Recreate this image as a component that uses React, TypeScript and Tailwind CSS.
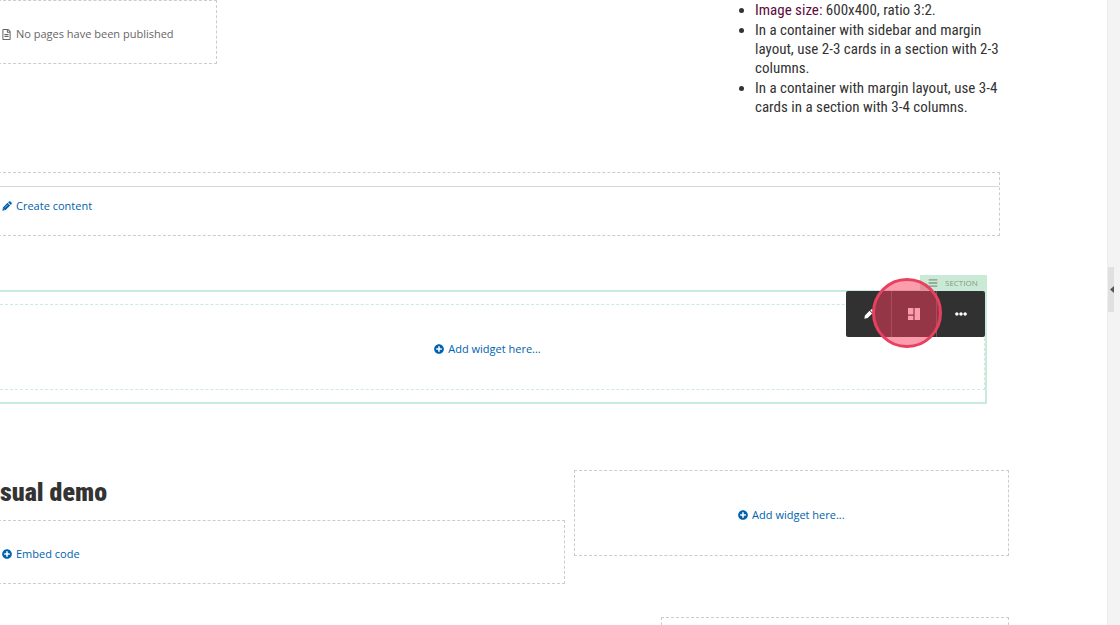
import React from 'react';
import { FaBars, FaEllipsisH, FaPlusCircle, FaRegFileAlt } from 'react-icons/fa';

interface ActionLinkProps {
  icon: React.ReactNode;
  children: React.ReactNode;
}

const ActionLink: React.FC<ActionLinkProps> = ({ icon, children }) => (
  <a href="#" className="inline-flex items-center gap-1 text-[11px] leading-4 text-[#0062ae]">
    {icon}
    <span>{children}</span>
  </a>
);

const PlusIcon = () => <FaPlusCircle className="size-2.5" />;

const PencilIcon = ({ className }: { className: string }) => (
  <svg viewBox="0 0 16 16" className={className} fill="currentColor" aria-hidden="true">
    <path d="M0.5 15.5 1.5 10.2 8.8 2.9 13.1 7.2 5.8 14.5zM9.8 1.9 11.2 0.6Q12.4 -0.2 13.5 0.8L15.2 2.5Q16.2 3.6 15.4 4.8L14.1 6.2z" />
    <path d="M2.3 12.1 3.9 13.7M4.6 10.6 9.6 5.6" stroke="white" strokeWidth="0.8" fill="none" />
  </svg>
);

const LayoutIcon = () => (
  <svg viewBox="0 0 12 12" className="size-3" fill="currentColor" aria-hidden="true">
    <path d="M0 0h5.4v6.6H0zM0 7.8h5.4V12H0zM6.6 0H12v12H6.6z" />
  </svg>
);

const SectionToolbar = () => (
  <div className="absolute -top-px right-0 flex h-[46px] divide-x divide-[#5c5c5c] rounded-[2px] bg-[#313131] text-white">
    <button type="button" aria-label="Edit section" className="flex w-[46px] items-center justify-center">
      <PencilIcon className="size-2.5" />
    </button>
    <button type="button" aria-label="Change layout" className="relative flex w-[45px] items-center justify-center">
      <LayoutIcon />
      {/* Click highlight */}
      <span className="pointer-events-none absolute -left-5 -top-[13px] size-[70px] rounded-full border-[3px] border-[#e8405f] bg-[#f73c5a]/50"></span>
    </button>
    <button type="button" aria-label="More options" className="flex w-12 items-center justify-center">
      <FaEllipsisH className="size-3" />
    </button>
  </div>
);

const GuidanceList = () => (
  <ul className="flex w-[246px] list-disc flex-col gap-px pt-px font-['Roboto_Condensed',sans-serif] text-[15px] leading-[19px] text-[#333]">
    <li>
      <span className="text-[#5c0a3c]">Image size:</span> 600x400, ratio 3:2.
    </li>
    <li>In a container with sidebar and margin layout, use 2-3 cards in a section with 2-3 columns.</li>
    <li>In a container with margin layout, use 3-4 cards in a section with 3-4 columns.</li>
  </ul>
);

export default function App() {
  return (
    <div className="flex h-screen overflow-hidden bg-white font-['Open_Sans',sans-serif]">
      <main className="-ml-3 min-w-0 flex-1">
        <div className="flex items-start justify-between pr-[106px]">
          <div className="flex h-16 w-[229px] items-center gap-1 border border-dashed border-[#ccc] px-3 pt-1 text-[11px] leading-4 text-[#666]">
            <FaRegFileAlt className="size-[11px]" />
            <span>No pages have been published</span>
          </div>
          <GuidanceList />
        </div>

        <div className="mr-[107px] mt-[55px] h-16 border border-dashed border-[#ccc] pt-[13px]">
          <div className="border-t border-[#d3d8db] px-[13px] pt-1.5">
            <ActionLink icon={<PencilIcon className="size-2.5" />}>Create content</ActionLink>
          </div>
        </div>

        <section className="mr-[120px] mt-[39px]">
          <div className="flex justify-end">
            <div className="flex h-[15px] w-[67px] items-center gap-[7px] bg-[#c9ebd5] pl-2 text-[8px] text-[#86968c]">
              <FaBars className="size-2.5" />
              <span>SECTION</span>
            </div>
          </div>
          <div className="relative h-[114px] border-2 border-[#c9ebdb] py-3">
            <div className="flex h-full items-center justify-center border border-dashed border-[#cfe9db] pt-1">
              <ActionLink icon={<PlusIcon />}>Add widget here...</ActionLink>
            </div>
            <SectionToolbar />
          </div>
        </section>

        <div className="mr-[98px] mt-[66px] grid grid-cols-[53fr_40fr] items-start gap-[9px]">
          <div>
            <h2 className="px-3 pt-1 font-['Roboto_Condensed',Roboto,sans-serif] text-[26px] font-black leading-9 text-[#333]">
              sual demo
            </h2>
            <div className="mt-2.5 flex h-16 items-center border border-dashed border-[#ccc] px-[13px] pt-1">
              <ActionLink icon={<PlusIcon />}>Embed code</ActionLink>
            </div>
          </div>
          <div>
            <div className="flex h-[86px] items-center justify-center border border-dashed border-[#ccc] pt-1">
              <ActionLink icon={<PlusIcon />}>Add widget here...</ActionLink>
            </div>
            <div className="ml-auto mt-[61px] h-16 w-4/5 border border-dashed border-[#ccc]"></div>
          </div>
        </div>
      </main>

      <aside className="flex w-[13px] flex-col border-l border-[#eee] bg-[#f3f3f3] pt-[267px]">
        <button type="button" aria-label="Open panel" className="flex h-[45px] w-1.5 items-center justify-end bg-[#e0e0e0] text-[#555]">
          <svg viewBox="0 0 4 7" className="h-[7px] w-1" fill="currentColor" aria-hidden="true">
            <path d="M4 0v7L0 3.5z" />
          </svg>
        </button>
      </aside>
    </div>
  );
}
